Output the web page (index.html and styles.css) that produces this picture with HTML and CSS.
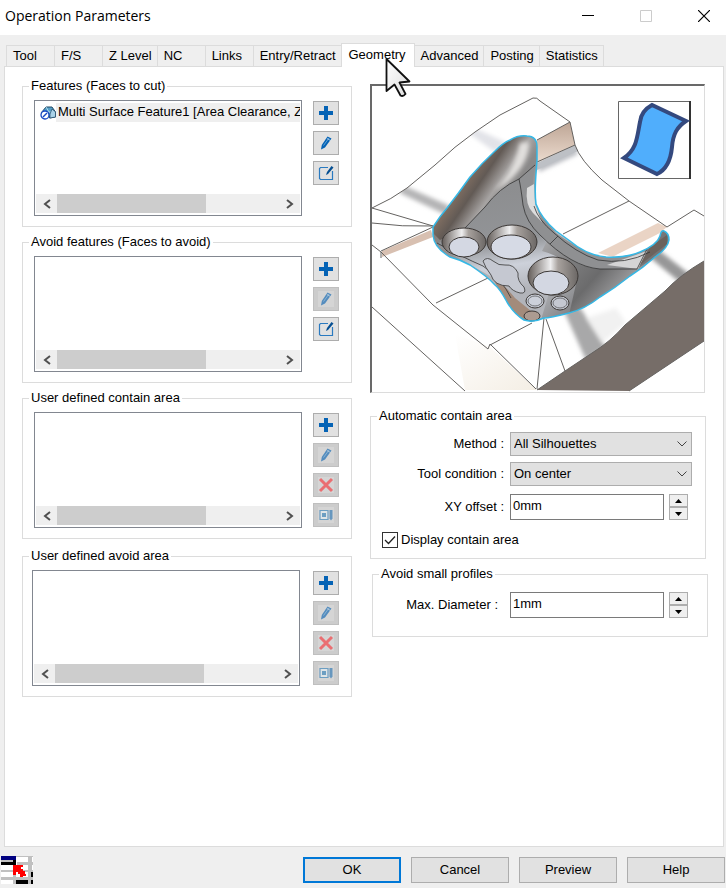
FILE: index.html
```html
<!DOCTYPE html>
<html lang="en">
<head>
<meta charset="utf-8">
<meta name="viewport" content="width=device-width, initial-scale=1">
<title>Operation Parameters</title>
<link rel="stylesheet" href="styles.css">
</head>
<body>
<svg class="defs" width="0" height="0" aria-hidden="true">
  <symbol id="i-plus" viewBox="0 0 16 16"><path d="M6 1h4v5h5v4h-5v5H6v-5H1V6h5z" fill="#0563b5"/></symbol>
  <symbol id="i-pencil" viewBox="0 0 16 16"><path d="M3 14.500l.8-4.500L9.500 1.500 13.500 3.500 7 12.500z" fill="#0563b5"/><path d="M5.500 10.500l5.500-7.500" stroke="#78b4e0" stroke-width=".8"/><path d="M9 3.500l3.500 2" stroke="#d5e4f0" stroke-width=".7"/></symbol>
  <symbol id="i-edit" viewBox="0 0 16 16"><path d="M10 2.500H2.500L1.500 3.500v10l1 1h12V6" fill="none" stroke="#2a7ac0" stroke-width="1.200"/><path d="M8 10l1-3 4.500-6 2 1.500L10 9z" fill="#064f92"/></symbol>
  <symbol id="i-delete" viewBox="0 0 16 16"><path d="M2 2l12 12M14 2L2 14" stroke="#ff3338" stroke-width="3"/></symbol>
  <symbol id="i-props" viewBox="0 0 16 16"><path d="M2 3.500h8v9H2z" fill="#eaf4fa" stroke="#2d80bd" stroke-width="1.200"/><path d="M4 6h4v4H4z" fill="#2d80bd"/><path d="M11.500 3h3v8.500L13 13.500l-1.500-2z" fill="#2574b5"/></symbol>
  <symbol id="i-left" viewBox="0 0 8 10"><path d="M7 1L2 5l5 4" fill="none" stroke="#505050" stroke-width="2"/></symbol>
  <symbol id="i-right" viewBox="0 0 8 10"><path d="M1 1l5 4-5 4" fill="none" stroke="#505050" stroke-width="2"/></symbol>
  <symbol id="i-chevron" viewBox="0 0 10 6"><path d="M.5 .5L5 5 9.500 .5" fill="none" stroke="#444" stroke-width="1"/></symbol>
  <symbol id="i-up" viewBox="0 0 7 4"><path d="M0 4L3.500 0 7 4z" fill="#000"/></symbol>
  <symbol id="i-down" viewBox="0 0 7 4"><path d="M0 0h7L3.500 4z" fill="#000"/></symbol>
</svg>

<header class="titlebar">
  <h1 class="title">Operation Parameters</h1>
  <div class="window-buttons">
    <button class="window-button" type="button" aria-label="Minimize"><svg width="12" height="12" viewBox="0 0 12 12"><path d="M0 5.500h12" stroke="#000"/></svg></button>
    <button class="window-button" type="button" aria-label="Maximize" disabled><svg width="12" height="12" viewBox="0 0 12 12"><path d="M.5 .5h11v11H.5z" fill="none" stroke="#ccc"/></svg></button>
    <button class="window-button" type="button" aria-label="Close"><svg width="12" height="12" viewBox="0 0 12 12"><path d="M0 0l12 12M12 0L0 12" stroke="#000" stroke-width="1.200"/></svg></button>
  </div>
</header>

<main class="dialog">
  <nav class="tabs" role="tablist">
    <button class="tab" role="tab" type="button">Tool</button>
    <button class="tab" role="tab" type="button">F/S</button>
    <button class="tab" role="tab" type="button">Z Level</button>
    <button class="tab" role="tab" type="button">NC</button>
    <button class="tab" role="tab" type="button">Links</button>
    <button class="tab" role="tab" type="button">Entry/Retract</button>
    <button class="tab tab--active" role="tab" type="button" aria-selected="true">Geometry
      <svg class="pointer" width="26" height="41" viewBox="0 0 26 41" aria-hidden="true"><defs><linearGradient id="ptr" x2="1" y2="1"><stop offset="0" stop-color="#fff"/><stop offset="1" stop-color="#ddd"/></linearGradient></defs><path d="M1.500 2v32l8-6.500 6 11q2.500 1.500 5-1.500l-6-11.500 10-1z" fill="url(#ptr)" stroke="#111" stroke-width="1.800" stroke-linejoin="round"/></svg>
    </button>
    <button class="tab" role="tab" type="button">Advanced</button>
    <button class="tab" role="tab" type="button">Posting</button>
    <button class="tab" role="tab" type="button">Statistics</button>
  </nav>

  <section class="panel">
    <div class="column">
      <fieldset class="group">
        <legend>Features (Faces to cut)</legend>
        <div class="picker">
          <div class="list">
            <ul class="items">
              <li class="item">
                <svg class="item-icon" width="16" height="14" viewBox="0 0 16 14" aria-hidden="true"><path d="M1 7l5-6h6l3.500 5v5l-6 1L8 6z" fill="#549fc7" stroke="#234b67"/><path d="M6 1l3 5h6" fill="none" stroke="#acd9ee"/><path d="M10 12V8l2-5 3.500 3v5z" fill="#a9d2e8" stroke="#234b67" stroke-width=".7"/><circle cx="5" cy="9" r="4" fill="#fff" stroke="#1647c4" stroke-width="1.300"/><path d="M3 11l4-4" stroke="#1647c4" stroke-width="1.500"/></svg>
                <span class="item-text">Multi Surface Feature1 [Area Clearance, Z</span>
              </li>
            </ul>
            <div class="scroll"><button class="scroll-arrow" type="button" aria-label="Scroll left"><svg width="8" height="10"><use href="#i-left"/></svg></button><div class="scroll-track"><div class="scroll-thumb"></div></div><button class="scroll-arrow" type="button" aria-label="Scroll right"><svg width="8" height="10"><use href="#i-right"/></svg></button></div>
          </div>
          <div class="tools">
            <button class="tool" type="button" aria-label="Add"><svg width="16" height="16"><use href="#i-plus"/></svg></button>
            <button class="tool" type="button" aria-label="Edit"><svg width="16" height="16"><use href="#i-pencil"/></svg></button>
            <button class="tool" type="button" aria-label="Modify"><svg width="16" height="16"><use href="#i-edit"/></svg></button>
          </div>
        </div>
      </fieldset>

      <fieldset class="group">
        <legend>Avoid features (Faces to avoid)</legend>
        <div class="picker">
          <div class="list">
            <ul class="items"></ul>
            <div class="scroll"><button class="scroll-arrow" type="button" aria-label="Scroll left"><svg width="8" height="10"><use href="#i-left"/></svg></button><div class="scroll-track"><div class="scroll-thumb"></div></div><button class="scroll-arrow" type="button" aria-label="Scroll right"><svg width="8" height="10"><use href="#i-right"/></svg></button></div>
          </div>
          <div class="tools">
            <button class="tool" type="button" aria-label="Add"><svg width="16" height="16"><use href="#i-plus"/></svg></button>
            <button class="tool" type="button" aria-label="Edit" disabled><svg width="16" height="16"><use href="#i-pencil"/></svg></button>
            <button class="tool" type="button" aria-label="Modify"><svg width="16" height="16"><use href="#i-edit"/></svg></button>
          </div>
        </div>
      </fieldset>

      <fieldset class="group">
        <legend>User defined contain area</legend>
        <div class="picker">
          <div class="list">
            <ul class="items"></ul>
            <div class="scroll"><button class="scroll-arrow" type="button" aria-label="Scroll left"><svg width="8" height="10"><use href="#i-left"/></svg></button><div class="scroll-track"><div class="scroll-thumb"></div></div><button class="scroll-arrow" type="button" aria-label="Scroll right"><svg width="8" height="10"><use href="#i-right"/></svg></button></div>
          </div>
          <div class="tools">
            <button class="tool" type="button" aria-label="Add"><svg width="16" height="16"><use href="#i-plus"/></svg></button>
            <button class="tool" type="button" aria-label="Edit" disabled><svg width="16" height="16"><use href="#i-pencil"/></svg></button>
            <button class="tool" type="button" aria-label="Delete" disabled><svg width="16" height="16"><use href="#i-delete"/></svg></button>
            <button class="tool" type="button" aria-label="Properties" disabled><svg width="16" height="16"><use href="#i-props"/></svg></button>
          </div>
        </div>
      </fieldset>

      <fieldset class="group group--last">
        <legend>User defined avoid area</legend>
        <div class="picker">
          <div class="list">
            <ul class="items"></ul>
            <div class="scroll"><button class="scroll-arrow" type="button" aria-label="Scroll left"><svg width="8" height="10"><use href="#i-left"/></svg></button><div class="scroll-track"><div class="scroll-thumb"></div></div><button class="scroll-arrow" type="button" aria-label="Scroll right"><svg width="8" height="10"><use href="#i-right"/></svg></button></div>
          </div>
          <div class="tools">
            <button class="tool" type="button" aria-label="Add"><svg width="16" height="16"><use href="#i-plus"/></svg></button>
            <button class="tool" type="button" aria-label="Edit" disabled><svg width="16" height="16"><use href="#i-pencil"/></svg></button>
            <button class="tool" type="button" aria-label="Delete" disabled><svg width="16" height="16"><use href="#i-delete"/></svg></button>
            <button class="tool" type="button" aria-label="Properties" disabled><svg width="16" height="16"><use href="#i-props"/></svg></button>
          </div>
        </div>
      </fieldset>
    </div>

    <div class="column">
      <figure class="preview">
        <svg class="scene" viewBox="372 86 332 306" aria-hidden="true">
          <defs>
            <linearGradient id="body" gradientUnits="userSpaceOnUse" x1="470" y1="170" x2="600" y2="300"><stop offset="0" stop-color="#77716e"/><stop offset=".4" stop-color="#a6a7aa"/><stop offset=".6" stop-color="#c0c3c9"/><stop offset=".8" stop-color="#a3a4a8"/><stop offset="1" stop-color="#747476"/></linearGradient>
            <linearGradient id="crest" gradientUnits="userSpaceOnUse" x1="462" y1="180" x2="500" y2="206"><stop offset="0" stop-color="#857264"/><stop offset=".35" stop-color="#625a55"/><stop offset=".7" stop-color="#a7a4a3"/><stop offset="1" stop-color="#8a8989"/></linearGradient>
            <linearGradient id="plate" gradientUnits="userSpaceOnUse" x1="500" y1="190" x2="515" y2="290"><stop offset="0" stop-color="#8d8e90"/><stop offset=".5" stop-color="#929497"/><stop offset=".75" stop-color="#cdd1da"/><stop offset="1" stop-color="#b2b4ba"/></linearGradient>
            <linearGradient id="wing" gradientUnits="userSpaceOnUse" x1="545" y1="235" x2="615" y2="297"><stop offset="0" stop-color="#aaaaac"/><stop offset=".4" stop-color="#7d7d7e"/><stop offset=".7" stop-color="#6b6b6c"/><stop offset="1" stop-color="#9b9b9d"/></linearGradient>
            <linearGradient id="tan" x2="0" y2="1"><stop offset="0" stop-color="#bda595"/><stop offset="1" stop-color="#eddccf"/></linearGradient>
            <linearGradient id="ring"><stop offset="0" stop-color="#645d59"/><stop offset=".45" stop-color="#eeeeef"/><stop offset=".6" stop-color="#a8a29e"/><stop offset="1" stop-color="#6b6765"/></linearGradient>
            <linearGradient id="cream" x2="1" y2="1"><stop offset="0" stop-color="#fff"/><stop offset="1" stop-color="#f4eee4"/></linearGradient>
            <filter id="soft" x="-30%" y="-30%" width="160%" height="160%"><feGaussianBlur stdDeviation="2"/></filter>
            <clipPath id="shape"><path d="M433 227Q440 216 447 208Q458 194 470 177Q482 163 495 151Q503 143 510 140Q518 135 527 136Q537 136 537 147V160C536 176 534 190 536 204Q541 218 556 231L570 241Q586 255 606 257Q626 258 640 252Q657 245 660 236Q661 230 664 231Q669 233 669 240Q668 248 655 257Q643 268 630 276Q615 288 600 297Q585 309 569 313Q550 318 544 318Q533 323 524 320Q514 314 507 302Q500 289 495 285Q488 277 470 265Q461 260 450 257Q434 248 433 235Z"/></clipPath>
            <clipPath id="ground"><path d="M372 208Q392 199 407 188L435 165Q455 146 475 132L500 115 533 98 570 122 575 145Q580 160 602 180L629 201 667 227 704 204V392H372z"/></clipPath>
          </defs>
          <path fill="#fff" d="M372 86h332v306H372z"/>
          <path d="M455 334L490 347 537 390H465z" fill="url(#cream)"/>
          <g clip-path="url(#ground)"><g filter="url(#soft)"><path d="M400 184l50 22-4 9-46-22z" fill="#b4b4b5"/><path d="M470 126l37 17-12 9-28-20z" fill="#e2e3e8"/><path d="M538 164l38-15 2 5-39 18z" fill="#b8bac0"/><path d="M564 311l15-5 27 42-20 12z" fill="#a8a8a9"/><path d="M586 318l30-10 10 15-24 20z" fill="#f1f1f1"/><path d="M648 256l8-8 36 28-10 8z" fill="#969697"/></g></g>
          <path d="M537 140l33-18 5 23-38 18z" fill="url(#tan)"/><path d="M537 163l38-18 3 6-41 19z" fill="#bdc0c5"/>
          <path d="M598 253l60-30 9 4-14 11-40 19z" fill="#ead4c5"/><path d="M614 256l44-22 3 4-21 14z" fill="#fff"/>
          <path d="M382 251l49-21 2 7-51 20z" fill="#d8c0b1"/>
          <path d="M537 390L565 371 592 353Q610 342 625 325L665 291Q680 275 704 261V341L665 367 629 391z" fill="#766d68"/>
          <g fill="none" stroke="#646260" stroke-width="1">
            <path d="M372 208Q392 199 407 188L435 165Q455 146 475 132L500 115 533 98Q537 97 540 101L570 122 575 145Q580 160 602 180L629 201 667 227 694 210 704 216"/>
            <path d="M537 140l33-18M537 162l38-17M563 234l66-33M372 208l61 18M372 223q30 4 61 3M372 245l9 7 52 53 55 44 2-5 46 45M381 251l52-24M436 303l52-25M490 345l42-22M372 307l93 84M544 318l-7 71M546 319l19 52M381 252v6M629 391l36-24 39-26M537 390l28-19 27-18q18-11 33-28l40-34q15-16 39-30"/>
          </g>
          <g clip-path="url(#shape)">
            <path fill="url(#body)" d="M430 130h245v200H430z"/>
            <path d="M430 230L447 205 497 146 525 132 541 140 537 164 519 179Q499 190 485 207L465 228 440 240z" fill="url(#crest)"/>
            <path d="M495 190Q515 169 520 143l9-1Q529 165 505 184z" fill="#e1dfdd" filter="url(#soft)"/>
            <path d="M465 228L485 207Q500 188 519 179L523 205Q526 220 536 231L560 257 540 323Q523 305 490 276L435 245z" fill="url(#plate)"/>
            <path d="M493 278Q505 285 515 298L542 320 524 324Q510 315 503 299z" fill="#a38b7b"/>
            <path d="M548 239Q575 268 600 269H637L655 257 600 299 569 315 578 275Q565 257 542 251z" fill="url(#wing)"/>
            <path d="M519 179l16-14Q531 188 534 206L556 233Q588 256 608 258L648 248 637 269H600Q575 268 550 244L534 230Q525 218 523 205z" fill="#8f9092"/>
            <path d="M527 188q-2 17 6 25l9 9-7-18-1-20z" fill="#ddd"/>
            <path d="M607 265l40-14-9 18z" fill="#d4d4d5"/><path d="M650 247l17-12v9l-27 21z" fill="#6b625d"/>
            <g fill="none" stroke="#333" stroke-width=".8"><path d="M465 228L485 207Q499 188 519 179L535 165M519 179Q521 188 523 205Q526 222 540 235Q572 267 600 269H637L648 247M534 206Q538 220 554 233Q576 253 598 260 625 265 650 252M550 244l8-8M437 243q25 14 46 23 19 13 28 32"/></g>
          </g>
          <g stroke="#3b3735" stroke-width="1"><ellipse cx="464" cy="242" rx="22" ry="14" fill="url(#ring)"/><ellipse cx="464" cy="247" rx="15" ry="10" fill="#d4d8e3"/><ellipse cx="512" cy="242" rx="25" ry="17" fill="url(#ring)"/><ellipse cx="511" cy="247" rx="20" ry="12" fill="#d6dae5"/><ellipse cx="553" cy="276" rx="25" ry="19" fill="url(#ring)"/><ellipse cx="551" cy="283" rx="18" ry="12" fill="#d3d7e2"/><ellipse cx="535" cy="301" rx="9" ry="7" fill="#ccd0da"/><ellipse cx="560" cy="303" rx="9" ry="7" fill="#c5c8d1"/><ellipse cx="532" cy="316" rx="8" ry="5" fill="#ac9b91"/></g>
          <g fill="none" stroke="#4b4b4c" stroke-width=".7"><ellipse cx="535" cy="301" rx="7" ry="5"/><ellipse cx="560" cy="303" rx="7" ry="5"/></g>
          <path d="M483 261q4-5 10 0t12 4q9-1 13 8-1 8 6 14 3 7-4 6-8-2-11-7-15 0-18-11-6-8-8-14z" fill="#c5c8d1" stroke="#454545" stroke-width=".9"/>
          <path d="M433 227Q440 216 447 208Q458 194 470 177Q482 163 495 151Q503 143 510 140Q518 135 527 136Q537 136 537 147V160C536 176 534 190 536 204Q541 218 556 231L570 241Q586 255 606 257Q626 258 640 252Q657 245 660 236Q661 230 664 231Q669 233 669 240Q668 248 655 257Q643 268 630 276Q615 288 600 297Q585 309 569 313Q550 318 544 318Q533 323 524 320Q514 314 507 302Q500 289 495 285Q488 277 470 265Q461 260 450 257Q434 248 433 235Z" fill="none" stroke="#35b8e6" stroke-width="1.500"/>
          <path d="M618.500 101.500h72v77h-72z" fill="#fff" stroke="#666"/><path d="M690 101v78" stroke="#333" stroke-width="2"/>
          <path d="M652 105Q641 111 640 122C637 137 637 149 624 158L657 174Q670 168 672 147C673 134 677 127 686 121Z" fill="#50aefc" stroke="#34497e" stroke-width="4"/>
        </svg>
      </figure>

      <fieldset class="group group--auto">
        <legend>Automatic contain area</legend>
        <div class="field">
          <label for="method">Method :</label>
          <div class="select"><select id="method"><option>All Silhouettes</option></select><svg class="select-arrow" width="10" height="6" aria-hidden="true"><use href="#i-chevron"/></svg></div>
        </div>
        <div class="field">
          <label for="condition">Tool condition :</label>
          <div class="select"><select id="condition"><option>On center</option></select><svg class="select-arrow" width="10" height="6" aria-hidden="true"><use href="#i-chevron"/></svg></div>
        </div>
        <div class="field field--number">
          <label for="offset">XY offset :</label>
          <div class="number"><input class="number-input" id="offset" type="text" value="0mm"><div class="spinner"><button class="spin" type="button" aria-label="Increase"><svg width="7" height="4"><use href="#i-up"/></svg></button><button class="spin" type="button" aria-label="Decrease"><svg width="7" height="4"><use href="#i-down"/></svg></button></div></div>
        </div>
        <div class="check"><input class="check-box" id="display" type="checkbox" checked><label for="display">Display contain area</label><svg class="check-mark" width="12" height="10" viewBox="0 0 12 10" aria-hidden="true"><path d="M1 5l3.500 3.500L11 1.500" fill="none" stroke="#222" stroke-width="1.300"/></svg></div>
      </fieldset>

      <fieldset class="group group--small">
        <legend>Avoid small profiles</legend>
        <div class="field">
          <label for="diameter">Max. Diameter :</label>
          <div class="number"><input class="number-input" id="diameter" type="text" value="1mm"><div class="spinner"><button class="spin" type="button" aria-label="Increase"><svg width="7" height="4"><use href="#i-up"/></svg></button><button class="spin" type="button" aria-label="Decrease"><svg width="7" height="4"><use href="#i-down"/></svg></button></div></div>
        </div>
      </fieldset>
    </div>
  </section>
</main>

<footer class="footer">
  <svg class="grid-icon" width="32" height="28" viewBox="0 0 32 28" shape-rendering="crispEdges" aria-hidden="true"><path fill="#fff" d="M0 0h32v28H0z"/><path fill="#c0c0c0" d="M0 4h15v2H0zM15 0h17v1H15zM27 0h4v28h-4zM0 14h32v2H0zM0 21h32v3H0zM16 6h16v3H16zM12 18h3v10h-3z"/><path fill="#000080" d="M0 0h15v4H0z"/><path fill="#000" d="M0 6h15v3H0zM12 4h3v5h-3zM15 24h12v4H15zM30 16h2v5h-2zM30 24h2v4h-2z"/><path fill="red" d="M12 9h10v2h-2v2h2v2h2v3h1v2h-3v1h-3v-3h-2v-2h-2v3h-3z"/></svg>
  <div class="actions">
    <button class="action action--default" type="button">OK</button>
    <button class="action" type="button">Cancel</button>
    <button class="action" type="button">Preview</button>
    <button class="action" type="button">Help</button>
  </div>
</footer>
</body>
</html>
```
FILE: styles.css
```css
* { box-sizing: border-box; }

body {
  display: flex;
  flex-direction: column;
  min-height: 100vh;
  margin: 0;
  background: #efefef;
  color: #000;
  font: 13px/16px "Liberation Sans", Arial, sans-serif;
}

button, input, select { margin: 0; color: inherit; font: inherit; }
button { padding: 0; }
svg { display: block; }
.defs { position: absolute; }

.titlebar {
  display: flex;
  align-items: center;
  justify-content: space-between;
  height: 35px;
  padding: 0 16px 3px 5px;
  background: #fff;
}
.title { margin: 0; font: 14px/20px "Open Sans", "Noto Sans", sans-serif; }
.window-buttons { display: flex; gap: 46px; }
.window-button { border: 0; background: none; }

.dialog {
  display: flex;
  flex: 1;
  flex-direction: column;
  padding: 8px 2px 0 4px;
}

.tabs { display: flex; align-items: flex-end; padding-left: 2px; }
.tab {
  min-width: 49px;
  height: 21px;
  margin-right: -1px;
  padding: 0 5px 0 6px;
  border: 1px solid #dcdcdc;
  border-bottom: 0;
  background: #efefef;
  text-align: left;
  white-space: nowrap;
}
.tab--active {
  position: relative;
  z-index: 1;
  height: 24px;
  margin-bottom: -1px;
  padding: 0 8px 1px 7px;
  background: #fff;
}
.pointer { position: absolute; top: 13px; left: 43px; }

.panel {
  display: grid;
  flex: 1;
  grid-template-columns: minmax(0, 330fr) minmax(0, 338fr);
  align-items: start;
  gap: 18px;
  padding: 11px 15px 11px 17px;
  border: 1px solid #dcdcdc;
  background: #fff;
}
.column { display: flex; flex-direction: column; gap: 7px; }

.group {
  min-width: 0;
  margin: 0;
  padding: 6px 12px 10px 11px;
  border: 1px solid #dcdcdc;
}
.group--last { margin-top: 2px; padding-left: 9px; }
legend { height: 16px; margin-left: -5px; padding: 0 2px; }
.group--last legend { margin-left: -3px; }

.picker { display: flex; gap: 11px; }
.group--last .picker { gap: 13px; }
.list {
  display: flex;
  flex: 1;
  flex-direction: column;
  justify-content: space-between;
  min-width: 0;
  height: 116px;
  padding: 1px 1px 2px;
  border: 1px solid #828790;
}
.items { margin: 0; padding: 1px 0 0 4px; list-style: none; }
.item { display: flex; align-items: center; }
.item-icon { flex: none; }
.item-text {
  flex: 1;
  overflow: hidden;
  padding: 1px 0 2px 2px;
  background: #efefef;
  white-space: nowrap;
}
.scroll { display: flex; height: 19px; background: #efefef; }
.scroll-arrow {
  display: grid;
  place-items: center;
  width: 21px;
  border: 0;
  background: none;
}
.scroll-track { flex: 1; }
.scroll-thumb { width: 67%; height: 100%; background: #cdcdcd; }

.tools { display: flex; flex-direction: column; gap: 6px; padding-top: 1px; }
.tool {
  display: grid;
  place-items: center;
  width: 26px;
  height: 24px;
  border: 1px solid #adadad;
  background: #e1e1e1;
}
.tool:disabled { border-color: #bfbfbf; background: #ccc; }
.tool:disabled svg { background: #dcdcdc; opacity: .6; }

.preview {
  margin: 6px 3px 8px 0;
  border: solid;
  border-width: 2px 1px 1px 2px;
  border-color: #696969 #dcdcdc #dcdcdc #696969;
}
.scene { width: 100%; height: auto; }

.group--auto {
  display: flex;
  flex-direction: column;
  gap: 6px;
  margin-right: 2px;
  padding: 8px 13px 10px 11px;
}
.group--small { margin-left: 2px; padding: 10px 15px 18px 11px; }
.field {
  display: grid;
  grid-template-columns: minmax(0, 1fr) 182px;
  align-items: center;
  gap: 6px;
}
.field > label { text-align: right; }
.field--number { margin-top: 2px; }
.group--small .field > label { padding-right: 6px; }
.select { position: relative; }
select {
  display: block;
  width: 100%;
  height: 24px;
  padding: 0 20px 0 3px;
  border: 1px solid #adadad;
  border-radius: 0;
  background: #e1e1e1;
  appearance: none;
}
.select-arrow { position: absolute; top: 9px; right: 5px; pointer-events: none; }
.number { display: flex; gap: 5px; padding-right: 4px; }
.number-input {
  flex: 1;
  min-width: 0;
  height: 26px;
  padding: 0 2px 4px;
  border: 1px solid #7a7a7a;
  background: #fff;
}
.spinner { display: grid; width: 19px; height: 26px; }
.spin {
  display: grid;
  place-items: center;
  border: 1px solid #adadad;
  background: #efefef;
}

.check {
  position: relative;
  display: flex;
  align-items: center;
  gap: 3px;
  margin-top: 6px;
}
.check-box {
  width: 16px;
  height: 16px;
  border: 1px solid #333;
  background: #fff;
  appearance: none;
}
.check-mark { position: absolute; top: 3px; left: 2px; pointer-events: none; visibility: hidden; }
.check-box:checked ~ .check-mark { visibility: visible; }

.footer {
  display: flex;
  align-items: center;
  justify-content: space-between;
  height: 41px;
  padding: 5px 1px 0;
}
.actions { display: flex; gap: 10px; }
.action {
  width: 98px;
  height: 26px;
  border: 1px solid #adadad;
  background: #e1e1e1;
}
.action--default { border: 2px solid #0078d7; }
```
